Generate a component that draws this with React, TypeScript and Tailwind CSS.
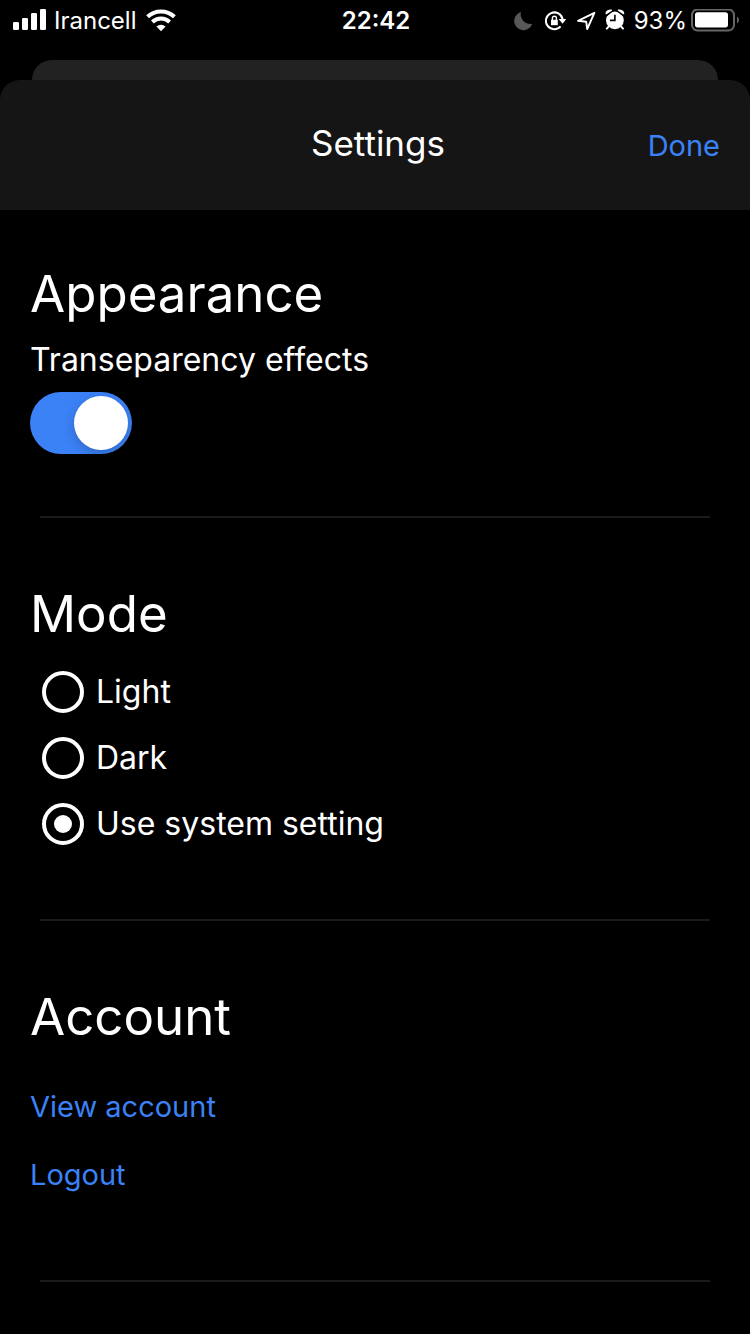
import { useState } from "react";

function SignalIcon() {
  return (
    <svg className="h-6 w-[33px]" viewBox="0 0 33 24" fill="currentColor" aria-hidden="true">
      <rect x="0" y="13" width="6" height="8" rx="1.3" />
      <rect x="9" y="9" width="6" height="12" rx="1.3" />
      <rect x="18" y="4" width="6" height="17" rx="1.3" />
      <rect x="27" y="0" width="6" height="21" rx="1.3" />
    </svg>
  );
}

function WifiIcon() {
  return (
    <svg className="h-6 w-[30px]" viewBox="0 0 30 24" aria-hidden="true">
      <g fill="none" stroke="currentColor" strokeWidth="4">
        <path d="M1.6 7.8A19.4 19.4 0 0 1 28.4 7.8" />
        <path d="M6.4 13A12.5 12.5 0 0 1 23.6 13" />
      </g>
      <path d="M10.4 17.6a7.3 7.3 0 0 1 9.2 0L15 22.2z" fill="currentColor" />
    </svg>
  );
}

function MoonIcon() {
  return (
    <svg className="h-6 w-[22px]" viewBox="0 0 22 24" fill="#58585a" aria-hidden="true">
      <path d="M7 3.1A9.2 9.2 0 1 0 18.2 14.8 9.6 9.6 0 0 1 7 3.1z" />
    </svg>
  );
}

function RotationLockIcon() {
  return (
    <svg className="h-6 w-[22px]" viewBox="0 0 22 24" aria-hidden="true">
      <path
        d="M15.6 17.4A8.4 8.4 0 1 1 17.6 10.4"
        fill="none"
        stroke="currentColor"
        strokeWidth="2"
      />
      <path d="M13.6 10h7.6l-3.6 4.8z" fill="currentColor" />
      <path d="M6 10.8h6.8v5.4H6z" fill="currentColor" />
      <path d="M7.4 11.4V9.2a2 2 0 0 1 4 0v2.2" fill="none" stroke="currentColor" strokeWidth="1.4" />
    </svg>
  );
}

function LocationIcon() {
  return (
    <svg className="h-6 w-5" viewBox="0 0 20 24" aria-hidden="true">
      <path
        d="M18.4 3.8 2 11.8l8.2 1 1 7.2z"
        fill="none"
        stroke="currentColor"
        strokeWidth="1.9"
        strokeLinejoin="round"
      />
    </svg>
  );
}

function AlarmIcon() {
  return (
    <svg className="h-6 w-5" viewBox="0 0 20 24" aria-hidden="true">
      <path d="m3.6 17.6-1.8 2M16.2 17.6l1.8 2" stroke="currentColor" strokeWidth="2" strokeLinecap="round" />
      <circle cx="9.9" cy="11.3" r="8.9" fill="currentColor" />
      <path d="M1 6 7.2 1M18.8 6 12.6 1" stroke="#000" strokeWidth="3" />
      <path d="M1.2 4.6Q1.2 1.2 6.4 1.2zM18.6 4.6Q18.6 1.2 13.4 1.2z" fill="currentColor" stroke="currentColor" strokeWidth="1.4" strokeLinejoin="round" />
      <path d="M9.9 5.8v5.6H5" fill="none" stroke="#000" strokeWidth="1.6" />
    </svg>
  );
}

function BatteryIcon() {
  return (
    <svg className="h-6 w-12" viewBox="0 0 48 24" aria-hidden="true">
      <rect x="1" y="0.5" width="42" height="21" rx="5.5" fill="none" stroke="#666" strokeWidth="2" />
      <rect x="4" y="3.2" width="33" height="15.2" rx="2.6" fill="currentColor" />
      <path d="M46 7.5q2 1 2 3.5t-2 3.5z" fill="#666" />
    </svg>
  );
}

function StatusBar() {
  return (
    <div className="grid h-[60px] grid-cols-[1fr_auto_1fr] items-start pt-[9px] pr-[11px] pl-[13px] text-2xl leading-6">
      <div className="flex items-center">
        <SignalIcon />
        <span className="pr-2.5 pl-2">Irancell</span>
        <WifiIcon />
      </div>
      <time className="font-semibold">22:42</time>
      <div className="flex items-center justify-end">
        <div className="flex items-center gap-[9px]">
          <MoonIcon />
          <RotationLockIcon />
          <LocationIcon />
          <AlarmIcon />
        </div>
        <span className="pr-1 pl-[9px]">93%</span>
        <BatteryIcon />
      </div>
    </div>
  );
}

const heading = "text-[51px] leading-[66px]";
const link = "flex h-[68px] items-center text-[#3b82f6]";
const modes = ["Light", "Dark", "Use system setting"];

function Divider() {
  return <hr className="mx-2.5 border-t-2 border-[#1a1a1a]" />;
}

export default function App() {
  const [transparency, setTransparency] = useState(true);
  const [mode, setMode] = useState("Use system setting");

  return (
    <div className="min-h-screen bg-black font-['Inter',sans-serif] text-white">
      <StatusBar />
      <div className="mx-8 h-5 rounded-t-[20px] bg-[#222]" />
      <header className="grid h-[130px] grid-cols-[1fr_auto_1fr] items-baseline rounded-t-[20px] bg-[#151515] pt-[43px] pr-[30px] pl-9">
        <h1 className="col-start-2 text-[35px] leading-10">Settings</h1>
        <button type="button" className="justify-self-end text-[29px] leading-10 text-[#3b82f6]">
          Done
        </button>
      </header>
      <main className="px-[30px]">
        <section className="pt-[51px] pb-[62px]">
          <h2 className={heading}>Appearance</h2>
          <label htmlFor="transparency" className="mt-[9px] block text-[32px] leading-12">
            Transeparency effects
          </label>
          <input
            id="transparency"
            type="checkbox"
            role="switch"
            checked={transparency}
            onChange={(e) => setTransparency(e.target.checked)}
            className="mt-2 flex h-[62px] w-[102px] appearance-none items-center rounded-full bg-[#39393d] p-1 before:size-[54px] before:rounded-full before:bg-white before:shadow-[0_4px_12px_rgba(0,0,0,0.2)] checked:justify-end checked:bg-[#3b82f6]"
          />
        </section>
        <Divider />
        <section className="pt-[63px] pb-[62px]">
          <h2 className={heading}>Mode</h2>
          <div role="radiogroup" aria-label="Mode" className="mt-3 pl-3">
            {modes.map((name) => (
              <label key={name} className="flex h-[66px] items-center gap-3 text-[32px] leading-12">
                <input
                  type="radio"
                  name="mode"
                  checked={mode === name}
                  onChange={() => setMode(name)}
                  className="grid size-[42px] appearance-none place-items-center rounded-full border-4 border-white before:size-[18px] before:rounded-full checked:before:bg-white"
                />
                {name}
              </label>
            ))}
          </div>
        </section>
        <Divider />
        <section className="pt-[63px] pb-[71px]">
          <h2 className={heading}>Account</h2>
          <nav className="mt-[23px] flex flex-col items-start text-[29px] leading-10">
            <a href="#account" className={link}>
              View account
            </a>
            <a href="#logout" className={link}>
              Logout
            </a>
          </nav>
        </section>
        <Divider />
      </main>
    </div>
  );
}
